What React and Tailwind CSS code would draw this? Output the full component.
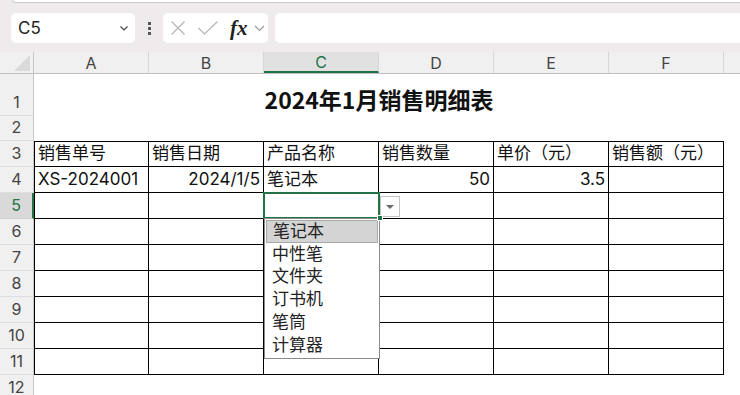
import React from 'react';

const font = { fontFamily: 'Inter, "Noto Sans CJK SC", sans-serif' };

const colLetters = ['A', 'B', 'C', 'D', 'E', 'F'];

const header = ['销售单号', '销售日期', '产品名称', '销售数量', '单价（元）', '销售额（元）'];
const firstRow = [
  { v: 'XS-2024001' },
  { v: '2024/1/5', right: true },
  { v: '笔记本' },
  { v: '50', right: true },
  { v: '3.5', right: true },
  { v: '' },
];

const options = ['笔记本', '中性笔', '文件夹', '订书机', '笔筒', '计算器'];

function RowLabel({ n, h, active }) {
  return (
    <div
      className={`${h} w-[34px] shrink-0 flex items-end justify-center pb-[1px] border-b border-r text-[16px] ${
        active
          ? 'bg-[#d9d9d9] text-[#217346] border-b-[#d0d0d0] border-r-2 border-r-[#217346]'
          : 'bg-[#f0f0f0] text-[#444] border-b-[#dedede] border-r-[#c8c8c8]'
      }`}
    >
      {n}
    </div>
  );
}

function Dropdown() {
  return (
    <>
      <div className="absolute -left-px -top-px w-[117px] h-[27px] border-2 border-[#217346] pointer-events-none" />
      <div className="absolute left-[113px] top-[22px] w-[6px] h-[6px] bg-[#217346] border border-white z-20" />
      <div className="absolute left-[116px] top-[3px] w-[20px] h-[21px] bg-white border border-[#c4c4c4] flex items-center justify-center">
        <div className="w-0 h-0 border-l-[4px] border-r-[4px] border-t-[4px] border-l-transparent border-r-transparent border-t-[#6a6a6a]" />
      </div>
      <div className="absolute left-0 top-[25px] w-[116px] h-[141px] bg-white border border-[#8a8a8a] z-10 pt-[1px] px-[1px]">
        {options.map((o, i) => (
          <div
            key={o}
            className={`h-[22.8px] flex items-center pl-[6px] text-[17px] leading-none text-[#222] ${
              i === 0 ? 'bg-[#d4d4d4] border border-[#a8a8a8]' : ''
            }`}
          >
            {o}
          </div>
        ))}
      </div>
    </>
  );
}

function TableRow({ n, cells, top, active }) {
  return (
    <div className="flex h-[26px]">
      <RowLabel n={n} h="h-[26px]" active={active} />
      {colLetters.map((c, i) => {
        const cell = cells ? cells[i] : { v: '' };
        return (
          <div
            key={c}
            className={`relative w-[115px] shrink-0 border-b border-r border-black flex items-center px-[3px] text-[17px] text-[#111] whitespace-nowrap ${
              top ? 'border-t' : ''
            } ${i === 0 ? 'border-l' : ''} ${cell.right ? 'justify-end' : ''} ${
              active && i === 2 ? 'z-10' : ''
            }`}
          >
            {cell.v}
            {active && i === 2 && <Dropdown />}
          </div>
        );
      })}
      <div className="flex-1" />
    </div>
  );
}

export default function App() {
  return (
    <div className="w-[740px] h-[395px] overflow-hidden bg-white" style={font}>
      {/* formula bar */}
      <div className="h-[52px] bg-[#efebed] flex flex-col">
        <div className="h-[3px] ml-[12px] bg-white border-b border-l border-[#cfcacc] rounded-bl-[4px]" />
        <div className="flex items-center mt-[10px] pl-[11px]">
          <div className="w-[124px] h-[30px] bg-white rounded-[5px] flex items-center justify-between pl-[7px] pr-[5px]">
            <span className="text-[17px] text-[#222] leading-none">C5</span>
            <svg width="12" height="12" viewBox="0 0 12 12">
              <path d="M2.5 4.5 L6 8 L9.5 4.5" fill="none" stroke="#444" strokeWidth="1.2" />
            </svg>
          </div>
          <div className="w-[28px] flex flex-col items-center gap-[2px]">
            <div className="w-[3px] h-[3px] bg-[#555]" />
            <div className="w-[3px] h-[3px] bg-[#555]" />
            <div className="w-[3px] h-[3px] bg-[#555]" />
          </div>
          <div className="w-[105px] h-[30px] bg-white rounded-[5px] flex items-center pl-[7px]">
            <svg width="16" height="16" viewBox="0 0 16 16">
              <path d="M1.5 1.5 L14.5 14.5 M14.5 1.5 L1.5 14.5" stroke="#b4b4b4" strokeWidth="1.2" fill="none" />
            </svg>
            <svg width="22" height="16" viewBox="0 0 22 16" className="ml-[11px]">
              <path d="M1.5 8 L7.5 14 L20.5 1.5" stroke="#b4b4b4" strokeWidth="1.2" fill="none" />
            </svg>
            <span
              className="ml-[11px] text-[21px] italic font-bold text-[#222] leading-none"
              style={{ fontFamily: '"Liberation Serif", serif' }}
            >
              fx
            </span>
            <svg width="13" height="12" viewBox="0 0 13 12" className="ml-[5px]">
              <path d="M2 4 L6.5 8.5 L11 4" fill="none" stroke="#999" strokeWidth="1.1" />
            </svg>
          </div>
          <div className="flex-1 h-[30px] bg-white rounded-l-[5px] ml-[7px]" />
        </div>
      </div>

      {/* column headers */}
      <div className="flex h-[22px] bg-[#f0f0f0] border-b border-[#c0c0c0]">
        <div className="w-[34px] shrink-0 border-r border-[#c8c8c8] flex items-end justify-end pr-[3px] pb-[2px]">
          <svg width="16" height="16" viewBox="0 0 16 16">
            <path d="M16 0 L16 16 L0 16 Z" fill="#dadada" />
          </svg>
        </div>
        {colLetters.map((c) => (
          <div
            key={c}
            className={`w-[115px] shrink-0 flex items-center justify-center text-[16px] border-r border-[#d6d6d6] ${
              c === 'C' ? 'bg-[#e1e1e1] text-[#217346] border-b-2 border-b-[#217346]' : 'text-[#444]'
            }`}
          >
            {c}
          </div>
        ))}
        <div className="flex-1" />
      </div>

      {/* row 1 title */}
      <div className="flex h-[42px]">
        <RowLabel n={1} h="h-[42px]" />
        <div className="w-[690px] shrink-0 flex items-end justify-center pb-[2px]">
          <span className="text-[23px] font-bold text-[#111] leading-none mb-[3px]" style={{ fontFamily: '"Noto Sans CJK SC", sans-serif' }}>
            2024年1月销售明细表
          </span>
        </div>
      </div>

      {/* row 2 */}
      <div className="flex h-[25px]">
        <RowLabel n={2} h="h-[25px]" />
      </div>

      <TableRow n={3} cells={header.map((v) => ({ v }))} top />
      <TableRow n={4} cells={firstRow} />
      <TableRow n={5} active />
      {[6, 7, 8, 9, 10, 11].map((n) => (
        <TableRow key={n} n={n} />
      ))}
      <div className="flex h-[26px]">
        <RowLabel n={12} h="h-[26px]" />
      </div>
    </div>
  );
}
